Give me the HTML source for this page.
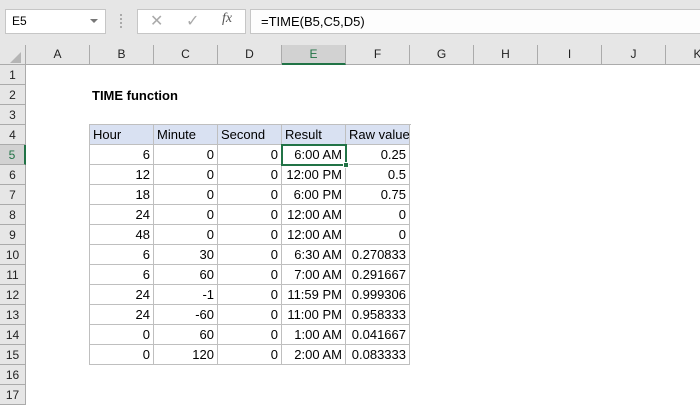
<!DOCTYPE html><html><head><style>
body{margin:0;width:700px;height:400px;overflow:hidden;background:#fff;font-family:"Liberation Sans",sans-serif;position:relative}
div{position:absolute;box-sizing:border-box}
.top{left:0;top:0;width:700px;height:45px;background:#e6e6e6}
.ch{top:45px;height:20px;background:#e6e6e6;border-right:1px solid #ababab;border-bottom:1px solid #ababab;font-size:12px;text-align:center;line-height:19px;color:#222}
.rh{left:0;width:26px;height:20px;background:#e6e6e6;border-bottom:1px solid #ababab;border-right:1px solid #ababab;font-size:12px;text-align:center;line-height:20px;color:#222}
.c{height:20px;border-right:1px solid #bfbfbf;border-bottom:1px solid #bfbfbf;font-size:13px;line-height:20px;padding:0 3px;text-align:right;white-space:nowrap;color:#000}
.h{background:#d9e1f2;text-align:left}
</style></head><body>
<div class="top"></div>
<div style="left:5px;top:9px;width:101px;height:25px;background:#fff;border:1px solid #c6c6c6;font-size:12px;line-height:23px;padding-left:6px">E5</div>
<div style="left:90px;top:19px;width:0;height:0;border-left:4px solid transparent;border-right:4px solid transparent;border-top:4px solid #777"></div>
<div style="left:120px;top:14px;width:2px;height:14px;border-left:2px dotted #aaa"></div>
<div style="left:137px;top:9px;width:109px;height:25px;background:#fff;border:1px solid #c6c6c6"></div>
<div style="left:150px;top:11px;font-size:16px;color:#aaa">✕</div>
<div style="left:186px;top:11px;font-size:16px;color:#aaa">✓</div>
<div style="left:222px;top:11px;font-size:14px;font-style:italic;font-family:'Liberation Serif',serif;color:#555">fx</div>
<div style="left:250px;top:9px;width:450px;height:25px;background:#fdfdfd;border:1px solid #c6c6c6;border-right:none;font-size:13px;line-height:23px;padding-left:10px">=TIME(B5,C5,D5)</div>
<div class="ch" style="left:0;width:26px"></div>
<div style="left:10px;top:52px;width:0;height:0;border-left:11px solid transparent;border-bottom:11px solid #b5b5b5"></div>
<div class="ch" style="left:26px;width:64px">A</div>
<div class="ch" style="left:90px;width:64px">B</div>
<div class="ch" style="left:154px;width:64px">C</div>
<div class="ch" style="left:218px;width:64px">D</div>
<div class="ch" style="left:282px;width:64px;background:#d2d2d2;border-bottom:2px solid #217346;color:#217346">E</div>
<div class="ch" style="left:346px;width:64px">F</div>
<div class="ch" style="left:410px;width:64px">G</div>
<div class="ch" style="left:474px;width:64px">H</div>
<div class="ch" style="left:538px;width:64px">I</div>
<div class="ch" style="left:602px;width:64px">J</div>
<div class="ch" style="left:666px;width:64px">K</div>
<div class="rh" style="top:65px">1</div><div class="rh" style="top:85px">2</div><div class="rh" style="top:105px">3</div><div class="rh" style="top:125px">4</div>
<div class="rh" style="top:145px;background:#d2d2d2;border-right:2px solid #217346;color:#217346">5</div>
<div class="rh" style="top:165px">6</div><div class="rh" style="top:185px">7</div><div class="rh" style="top:205px">8</div><div class="rh" style="top:225px">9</div><div class="rh" style="top:245px">10</div><div class="rh" style="top:265px">11</div><div class="rh" style="top:285px">12</div><div class="rh" style="top:305px">13</div><div class="rh" style="top:325px">14</div><div class="rh" style="top:345px">15</div><div class="rh" style="top:365px">16</div><div class="rh" style="top:385px">17</div>
<div style="left:92px;top:87px;font-size:13px;font-weight:bold;line-height:18px">TIME function</div>
<div style="left:89px;top:124px;width:322px;height:241px;border-left:1px solid #bfbfbf;border-top:1px solid #bfbfbf"></div>
<div class="c h" style="left:90px;top:125px;width:64px">Hour</div>
<div class="c h" style="left:154px;top:125px;width:64px">Minute</div>
<div class="c h" style="left:218px;top:125px;width:64px">Second</div>
<div class="c h" style="left:282px;top:125px;width:64px">Result</div>
<div class="c h" style="left:346px;top:125px;width:64px">Raw value</div>

<div class="c" style="left:90px;top:145px;width:64px">6</div><div class="c" style="left:154px;top:145px;width:64px">0</div><div class="c" style="left:218px;top:145px;width:64px">0</div><div class="c" style="left:282px;top:145px;width:64px">6:00 AM</div><div class="c" style="left:346px;top:145px;width:64px">0.25</div>
<div class="c" style="left:90px;top:165px;width:64px">12</div><div class="c" style="left:154px;top:165px;width:64px">0</div><div class="c" style="left:218px;top:165px;width:64px">0</div><div class="c" style="left:282px;top:165px;width:64px">12:00 PM</div><div class="c" style="left:346px;top:165px;width:64px">0.5</div>
<div class="c" style="left:90px;top:185px;width:64px">18</div><div class="c" style="left:154px;top:185px;width:64px">0</div><div class="c" style="left:218px;top:185px;width:64px">0</div><div class="c" style="left:282px;top:185px;width:64px">6:00 PM</div><div class="c" style="left:346px;top:185px;width:64px">0.75</div>
<div class="c" style="left:90px;top:205px;width:64px">24</div><div class="c" style="left:154px;top:205px;width:64px">0</div><div class="c" style="left:218px;top:205px;width:64px">0</div><div class="c" style="left:282px;top:205px;width:64px">12:00 AM</div><div class="c" style="left:346px;top:205px;width:64px">0</div>
<div class="c" style="left:90px;top:225px;width:64px">48</div><div class="c" style="left:154px;top:225px;width:64px">0</div><div class="c" style="left:218px;top:225px;width:64px">0</div><div class="c" style="left:282px;top:225px;width:64px">12:00 AM</div><div class="c" style="left:346px;top:225px;width:64px">0</div>
<div class="c" style="left:90px;top:245px;width:64px">6</div><div class="c" style="left:154px;top:245px;width:64px">30</div><div class="c" style="left:218px;top:245px;width:64px">0</div><div class="c" style="left:282px;top:245px;width:64px">6:30 AM</div><div class="c" style="left:346px;top:245px;width:64px">0.270833</div>
<div class="c" style="left:90px;top:265px;width:64px">6</div><div class="c" style="left:154px;top:265px;width:64px">60</div><div class="c" style="left:218px;top:265px;width:64px">0</div><div class="c" style="left:282px;top:265px;width:64px">7:00 AM</div><div class="c" style="left:346px;top:265px;width:64px">0.291667</div>
<div class="c" style="left:90px;top:285px;width:64px">24</div><div class="c" style="left:154px;top:285px;width:64px">-1</div><div class="c" style="left:218px;top:285px;width:64px">0</div><div class="c" style="left:282px;top:285px;width:64px">11:59 PM</div><div class="c" style="left:346px;top:285px;width:64px">0.999306</div>
<div class="c" style="left:90px;top:305px;width:64px">24</div><div class="c" style="left:154px;top:305px;width:64px">-60</div><div class="c" style="left:218px;top:305px;width:64px">0</div><div class="c" style="left:282px;top:305px;width:64px">11:00 PM</div><div class="c" style="left:346px;top:305px;width:64px">0.958333</div>
<div class="c" style="left:90px;top:325px;width:64px">0</div><div class="c" style="left:154px;top:325px;width:64px">60</div><div class="c" style="left:218px;top:325px;width:64px">0</div><div class="c" style="left:282px;top:325px;width:64px">1:00 AM</div><div class="c" style="left:346px;top:325px;width:64px">0.041667</div>
<div class="c" style="left:90px;top:345px;width:64px">0</div><div class="c" style="left:154px;top:345px;width:64px">120</div><div class="c" style="left:218px;top:345px;width:64px">0</div><div class="c" style="left:282px;top:345px;width:64px">2:00 AM</div><div class="c" style="left:346px;top:345px;width:64px">0.083333</div>

<div style="left:281px;top:144px;width:66px;height:22px;border:2px solid #217346"></div>
<div style="left:343px;top:162px;width:6px;height:6px;background:#217346;border:1px solid #fff"></div>
</body></html>
